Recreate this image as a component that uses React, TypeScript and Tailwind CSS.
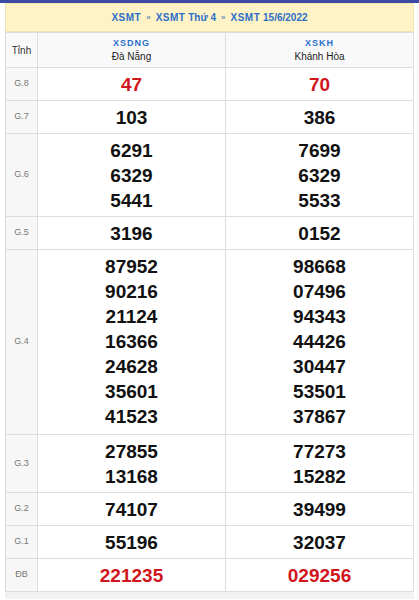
import React from "react";

type Row = { label: string; a: string[]; b: string[]; red?: boolean };

const rows: Row[] = [
  { label: "G.8", a: ["47"], b: ["70"], red: true },
  { label: "G.7", a: ["103"], b: ["386"] },
  { label: "G.6", a: ["6291", "6329", "5441"], b: ["7699", "6329", "5533"] },
  { label: "G.5", a: ["3196"], b: ["0152"] },
  {
    label: "G.4",
    a: ["87952", "90216", "21124", "16366", "24628", "35601", "41523"],
    b: ["98668", "07496", "94343", "44426", "30447", "53501", "37867"],
  },
  { label: "G.3", a: ["27855", "13168"], b: ["77273", "15282"] },
  { label: "G.2", a: ["74107"], b: ["39499"] },
  { label: "G.1", a: ["55196"], b: ["32037"] },
  { label: "ĐB", a: ["221235"], b: ["029256"], red: true },
];

function Nums({ list, red }: { list: string[]; red?: boolean }) {
  // long lists (G.4) get a little extra room at the bottom
  const pad = list.length > 5 ? "pt-[4px] pb-[5px]" : "pt-[4px] pb-[3px]";
  return (
    <td className={`border border-[#dddddd] ${pad} text-center align-middle`}>
      {list.map((n, i) => (
        <div
          key={i}
          className={`text-[19px] leading-[25px] font-bold ${red ? "text-[#d0161c]" : "text-[#111111]"}`}
        >
          {n}
        </div>
      ))}
    </td>
  );
}

export default function App() {
  return (
    <div className="min-h-[600px] bg-white font-['Liberation_Sans',Arial,sans-serif]">
      <div className="h-[3px] bg-[#3c4aa5]" />
      <div className="px-[5px]">
        <div className="flex h-[29px] items-center justify-center gap-[5px] border border-[#efe3b3] bg-[#fff3c6] text-[10px] font-bold text-[#2a6fc9]">
          <span className="tracking-[0.5px]">XSMT</span>
          <span className="text-[8px] text-[#6d8fb3]">»</span>
          <span><span className="tracking-[0.5px]">XSMT</span> Thứ 4</span>
          <span className="text-[8px] text-[#6d8fb3]">»</span>
          <span><span className="tracking-[0.5px]">XSMT</span> 15/6/2022</span>
        </div>
        <table className="w-full table-fixed border-collapse">
          <colgroup>
            <col className="w-[32px]" />
            <col />
            <col />
          </colgroup>
          <thead>
            <tr className="h-[35px] bg-[#f9f9f9]">
              <th className="border border-[#dddddd] text-[10px] font-normal text-[#333333]">Tỉnh</th>
              <th className="border border-[#dddddd] font-normal">
                <div className="text-[9px] font-bold tracking-[1px] leading-[14px] text-[#2a6fc9]">XSDNG</div>
                <div className="text-[10px] leading-[14px] text-[#222222]">Đà Nẵng</div>
              </th>
              <th className="border border-[#dddddd] font-normal">
                <div className="text-[9px] font-bold tracking-[1px] leading-[14px] text-[#2a6fc9]">XSKH</div>
                <div className="text-[10px] leading-[14px] text-[#222222]">Khánh Hòa</div>
              </th>
            </tr>
          </thead>
          <tbody>
            {rows.map((r) => (
              <tr key={r.label}>
                <td className="border border-[#dddddd] bg-[#f7f7f7] text-center text-[9px] text-[#777777]">{r.label}</td>
                <Nums list={r.a} red={r.red} />
                <Nums list={r.b} red={r.red} />
              </tr>
            ))}
          </tbody>
        </table>
        <div className="h-[7px] bg-[#f2f2f2]" />
      </div>
    </div>
  );
}
